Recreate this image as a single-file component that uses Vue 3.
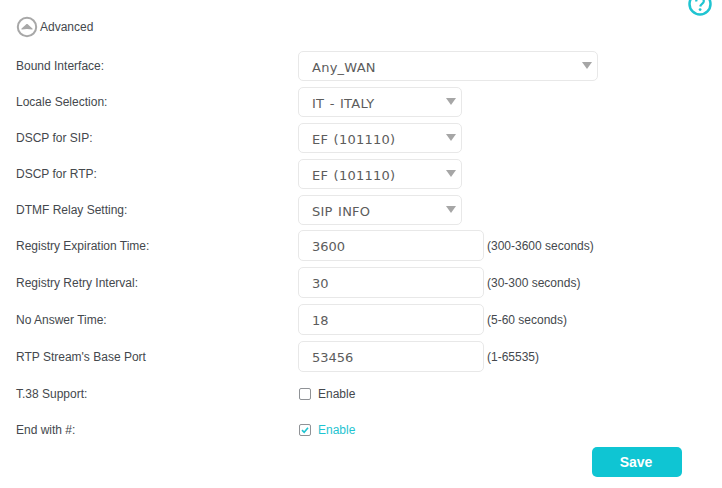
<script setup>
const selects = [
  { label: 'Bound Interface:', value: 'Any_WAN', wide: true },
  { label: 'Locale Selection:', value: 'IT - ITALY' },
  { label: 'DSCP for SIP:', value: 'EF (101110)' },
  { label: 'DSCP for RTP:', value: 'EF (101110)' },
  { label: 'DTMF Relay Setting:', value: 'SIP INFO' },
]
const inputs = [
  { label: 'Registry Expiration Time:', value: '3600', hint: '(300-3600 seconds)' },
  { label: 'Registry Retry Interval:', value: '30', hint: '(30-300 seconds)' },
  { label: 'No Answer Time:', value: '18', hint: '(5-60 seconds)' },
  { label: "RTP Stream's Base Port", value: '53456', hint: '(1-65535)' },
]
</script>

<template>
  <main class="page">
    <svg class="help" width="26" height="26" viewBox="0 0 26 26" aria-hidden="true">
      <circle cx="13" cy="13" r="10.5" fill="none" stroke="#1fc4d1" stroke-width="2.5" />
      <path d="M9.2 10.6c0-2.3 1.7-3.7 3.8-3.7s3.8 1.3 3.8 3.3c0 2.6-3.3 2.7-3.6 5.3" fill="none" stroke="#1fc4d1" stroke-width="2.2" />
      <circle cx="13.1" cy="18.6" r="1.4" fill="#1fc4d1" />
    </svg>

    <header class="advanced">
      <svg width="22" height="22" viewBox="0 0 22 22" aria-hidden="true">
        <circle cx="11" cy="11" r="9.2" fill="none" stroke="#a8a8a8" stroke-width="2" />
        <path d="M5.6 12.6 10 8.4c.6-.5 1.4-.5 2 0l4.400 4.200c.5.5.1 1.100-.5 1-3.200-.7-6.600-.7-9.800 0-.6.100-1-.5-.5-1z" fill="#a8a8a8" />
      </svg>
      <span>Advanced</span>
    </header>

    <section class="rows">
      <div v-for="s in selects" :key="s.label" class="row">
        <label>{{ s.label }}</label>
        <div class="field select" :class="{ wide: s.wide }">
          <span>{{ s.value }}</span>
          <i class="caret"></i>
        </div>
      </div>
    </section>

    <section class="rows inputs">
      <div v-for="f in inputs" :key="f.label" class="row tall">
        <label>{{ f.label }}</label>
        <div class="field input"><span>{{ f.value }}</span></div>
        <span class="hint">{{ f.hint }}</span>
      </div>
    </section>

    <section class="checks">
      <div class="row check-row">
        <label>T.38 Support:</label>
        <span class="box"></span>
        <span class="check-label">Enable</span>
      </div>
      <div class="row check-row">
        <label>End with #:</label>
        <span class="box">
          <svg width="10" height="10" viewBox="0 0 11 11" aria-hidden="true">
            <path d="M2.200 5.600 4.600 8l4.200-5" fill="none" stroke="#1fc4d1" stroke-width="1.800" />
          </svg>
        </span>
        <span class="check-label on">Enable</span>
      </div>
    </section>

    <footer class="actions">
      <button type="button">Save</button>
    </footer>
  </main>
</template>

<style scoped>
.page {
  position: relative;
  width: 722px;
  height: 488px;
  overflow: hidden;
  background: #fff;
  color: #44484d;
  font-family: "Liberation Sans", Arial, sans-serif;
  font-size: 12px;
  box-sizing: border-box;
  padding: 16px 0 0 16px;
}
.help {
  position: absolute;
  top: -9px;
  left: 687px;
}
.advanced {
  display: flex;
  align-items: center;
  gap: 2px;
  height: 22px;
  font-size: 12px;
}
.rows {
  display: flex;
  flex-direction: column;
  gap: 6px;
  margin-top: 13px;
}
.row {
  display: flex;
  align-items: center;
  height: 30px;
}
.row label {
  width: 282px;
  flex: none;
}
.field {
  box-sizing: border-box;
  display: flex;
  align-items: center;
  border: 1px solid #e8e8e8;
  border-radius: 5px;
  background: #fff;
  color: #5c5c5c;
  font-family: "DejaVu Sans", Verdana, sans-serif;
  font-size: 13px;
  padding: 2px 0 0 13px;
}
.select {
  position: relative;
  width: 164px;
  height: 30px;
  letter-spacing: 0.25px;
  word-spacing: 1px;
}
.select.wide {
  width: 300px;
}
.caret {
  position: absolute;
  right: 5px;
  top: 10px;
  width: 0;
  height: 0;
  border-left: 5.5px solid transparent;
  border-right: 5.5px solid transparent;
  border-top: 7px solid #a6a6a6;
}
.inputs {
  margin-top: 5px;
}
.tall {
  height: 31px;
}
.input {
  width: 186px;
  height: 31px;
}
.hint {
  margin-left: 3px;
  font-size: 12px;
}
.checks {
  display: flex;
  flex-direction: column;
  gap: 16px;
  margin-top: 12px;
}
.check-row {
  height: 20px;
}
.box {
  box-sizing: border-box;
  display: flex;
  align-items: center;
  justify-content: center;
  width: 12px;
  height: 12px;
  margin-left: 1px;
  border: 1px solid #8f9296;
  border-radius: 2px;
}
.check-label {
  margin-left: 7px;
}
.check-label.on {
  color: #1fc4d1;
}
.actions {
  display: flex;
  justify-content: flex-end;
  margin-top: 7px;
  padding-right: 40px;
}
button {
  width: 90px;
  height: 30px;
  border: 0;
  border-radius: 5px;
  background: #0fc5d3;
  color: #fff;
  font-family: "Liberation Sans", Arial, sans-serif;
  font-size: 14px;
  font-weight: 700;
  padding: 0 2px 0 0;
}
</style>
